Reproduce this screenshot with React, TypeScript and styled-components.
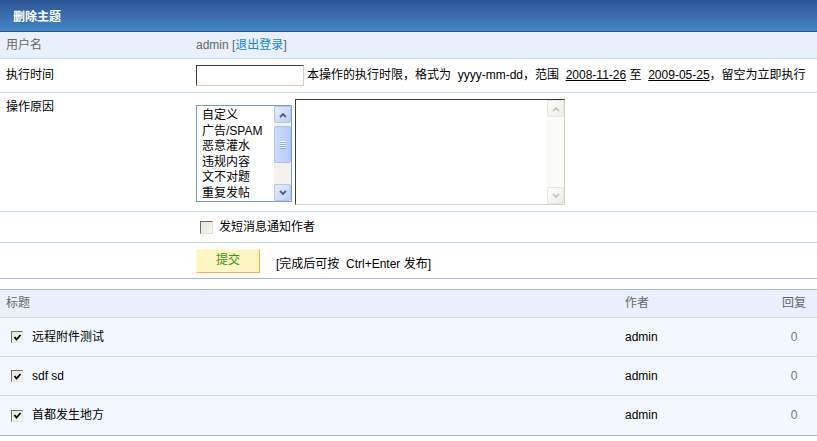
import React from 'react';
import styled, { createGlobalStyle } from 'styled-components';

const Global = createGlobalStyle`
  html, body { margin: 0; padding: 0; background: #fff; }
  body {
    font-family: "Liberation Sans", "Noto Sans CJK SC", sans-serif;
    font-size: 12px;
    color: #000;
  }
  * { box-sizing: border-box; }
`;

const Page = styled.div`
  width: 817px;
`;

const TitleBar = styled.div`
  height: 32px;
  border-bottom: 1px solid #29528e;
  background: linear-gradient(#2d5596, #4486c5);
  color: #fff;
  font-weight: bold;
  font-size: 12px;
  display: flex;
  align-items: center;
  padding-left: 13px;
  padding-bottom: 1px;
`;

const FormRow = styled.div<{ $h: number; $bg?: string; $line?: string; $top?: boolean }>`
  display: grid;
  grid-template-columns: 196px 1fr;
  height: ${p => p.$h}px;
  background: ${p => p.$bg || '#fff'};
  border-bottom: 1px solid ${p => p.$line || '#c5d8ec'};
  align-items: ${p => (p.$top ? 'start' : 'center')};
`;

const Label = styled.div<{ $muted?: boolean; $padTop?: number }>`
  padding-left: 6px;
  padding-top: ${p => p.$padTop || 0}px;
  line-height: 15px;
  color: ${p => (p.$muted ? '#666' : '#000')};
`;

const Value = styled.div<{ $muted?: boolean; $padTop?: number; $top?: boolean; $indent?: number }>`
  display: flex;
  align-items: ${p => (p.$top ? 'flex-start' : 'center')};
  padding-top: ${p => p.$padTop || 0}px;
  padding-left: ${p => p.$indent || 0}px;
  line-height: 15px;
  color: ${p => (p.$muted ? '#666' : '#000')};
  white-space: nowrap;
`;

const Text = styled.span`
  white-space: pre;
`;

const Link = styled.a`
  color: #1a86c6;
  text-decoration: none;
`;

const TextInput = styled.input`
  width: 108px;
  height: 21px;
  margin: 0 3px 0 0;
  padding: 1px 2px;
  border-style: solid;
  border-width: 1px;
  border-color: #3c3c3c #d4d0c8 #d4d0c8 #3c3c3c;
  background: #fff;
  font: inherit;
  outline: none;
`;

const Under = styled.span`
  text-decoration: underline;
`;

const ListBox = styled.div`
  width: 96px;
  height: 97px;
  margin-top: 6px;
  margin-right: 3px;
  border: 1px solid #7f9db9;
  display: flex;
  background: #fff;
`;

const Options = styled.div`
  flex: 1;
  overflow: hidden;
  padding: 2px 0 0 5px;
  line-height: 15.5px;
  font-size: 12px;
  color: #000;
`;

const ScrollBar = styled.div<{ $off?: boolean }>`
  width: 17px;
  display: flex;
  flex-direction: column;
  justify-content: space-between;
  background: ${p => (p.$off ? '#fbfbf7' : '#f3f2ec')};
`;

const ScrollBtn = styled.div<{ $off?: boolean }>`
  width: 17px;
  height: 17px;
  border: 1px solid ${p => (p.$off ? '#e6e6de' : '#b3c7f4')};
  border-radius: 2px;
  background: ${p =>
    p.$off ? 'linear-gradient(135deg, #fdfdfb, #ededE6)' : 'linear-gradient(135deg, #e6eefe, #bccffa)'};
  display: flex;
  align-items: center;
  justify-content: center;
`;

const Thumb = styled.div`
  height: 37px;
  margin-top: 3px;
  border: 1px solid #a9c1f3;
  border-radius: 2px;
  background: linear-gradient(90deg, #cbdafd, #b8cdfb);
  display: flex;
  flex-direction: column;
  align-items: center;
  justify-content: center;
  gap: 1px;
`;

const Grip = styled.span`
  width: 6px;
  height: 1px;
  background: #eef3fe;
  box-shadow: 0 1px 0 #8eaef0;
`;

const Track = styled.div`
  flex: 1;
  display: flex;
  flex-direction: column;
`;

const AreaBox = styled.div`
  width: 270px;
  height: 106px;
  border-style: solid;
  border-width: 1px;
  border-color: #3c3c3c #d4d0c8 #d4d0c8 #3c3c3c;
  display: flex;
  background: #fff;
`;

const Area = styled.textarea`
  flex: 1;
  border: none;
  resize: none;
  outline: none;
  font: inherit;
  padding: 2px;
  overflow: hidden;
  background: transparent;
`;

const Box = styled.span<{ $size: number }>`
  display: inline-flex;
  align-items: center;
  justify-content: center;
  width: ${p => p.$size}px;
  height: ${p => p.$size}px;
  border-style: solid;
  border-width: 1px;
  border-color: #6f6f6f #e4e4dc #e4e4dc #6f6f6f;
  background: linear-gradient(135deg, #e6e6df, #f6f6f2);
  flex: none;
`;

const CheckLabel = styled.span`
  margin-left: 6px;
`;

const Submit = styled.button`
  width: 64px;
  height: 24px;
  padding: 0;
  border-style: solid;
  border-width: 1px;
  border-color: #fff8d8 #f1b44a #f1b44a #fff8d8;
  background: #fff5c3;
  color: #2a9a14;
  font: inherit;
  font-size: 12px;
`;

const Hint = styled.span`
  margin-left: 16px;
  padding-top: 7px;
  white-space: pre;
`;

const Spacer = styled.div`
  height: 10px;
`;

const Table = styled.div`
  border-top: 1px solid #a6b8cb;
`;

const TRow = styled.div<{ $head?: boolean; $h: number; $last?: boolean }>`
  display: grid;
  grid-template-columns: 619px 152px 46px;
  align-items: center;
  height: ${p => p.$h}px;
  background: ${p => (p.$head ? '#e8f1fb' : '#f3f8fe')};
  border-bottom: 1px solid ${p => (p.$last ? '#a6b8cb' : '#c5d8ec')};
  color: ${p => (p.$head ? '#666' : '#000')};
  line-height: 15px;
`;

const TitleCell = styled.div<{ $pad: number }>`
  display: flex;
  align-items: center;
  padding-left: ${p => p.$pad}px;
`;

const TitleText = styled.span`
  margin-left: 9px;
`;

const AuthorCell = styled.div`
  padding-left: 6px;
`;

const ReplyCell = styled.div<{ $muted?: boolean }>`
  text-align: center;
  color: ${p => (p.$muted ? '#777' : 'inherit')};
`;

const Arrow = ({ up, off }: { up?: boolean; off?: boolean }) => (
  <svg width="8" height="6" viewBox="0 0 8 6">
    <path
      d={up ? 'M1 5 L4 2 L7 5' : 'M1 1 L4 4 L7 1'}
      fill="none"
      stroke={off ? '#c9c9c0' : '#4d6185'}
      strokeWidth="1.8"
    />
  </svg>
);

const Check = () => (
  <svg width="9" height="9" viewBox="0 0 9 9">
    <path d="M1.5 4 L3.5 6.5 L7.5 2" fill="none" stroke="#000" strokeWidth="1.8" />
  </svg>
);

const reasons = ['自定义', '广告/SPAM', '恶意灌水', '违规内容', '文不对题', '重复发帖'];

const topics = [
  { title: '远程附件测试', author: 'admin', replies: 0 },
  { title: 'sdf sd', author: 'admin', replies: 0 },
  { title: '首都发生地方', author: 'admin', replies: 0 },
];

export default function App() {
  return (
    <Page>
      <Global />
      <TitleBar>删除主题</TitleBar>

      <FormRow $h={27} $bg="#e8f1fb">
        <Label $muted>用户名</Label>
        <Value $muted>
          <Text>
            admin [<Link href="#">退出登录</Link>]
          </Text>
        </Value>
      </FormRow>

      <FormRow $h={34}>
        <Label>执行时间</Label>
        <Value>
          <TextInput type="text" />
          <Text>
            {'本操作的执行时限，格式为  yyyy-mm-dd，范围  '}
            <Under>2008-11-26</Under>
            {' 至  '}
            <Under>2009-05-25</Under>
            {'，留空为立即执行'}
          </Text>
        </Value>
      </FormRow>

      <FormRow $h={119} $top>
        <Label $padTop={7}>操作原因</Label>
        <Value $top $padTop={6}>
          <ListBox>
            <Options>
              {reasons.map(r => (
                <div key={r}>{r}</div>
              ))}
            </Options>
            <ScrollBar>
              <Track>
                <ScrollBtn>
                  <Arrow up />
                </ScrollBtn>
                <Thumb>
                  <Grip />
                  <Grip />
                  <Grip />
                  <Grip />
                </Thumb>
              </Track>
              <ScrollBtn>
                <Arrow />
              </ScrollBtn>
            </ScrollBar>
          </ListBox>
          <AreaBox>
            <Area />
            <ScrollBar $off>
              <ScrollBtn $off>
                <Arrow up off />
              </ScrollBtn>
              <ScrollBtn $off>
                <Arrow off />
              </ScrollBtn>
            </ScrollBar>
          </AreaBox>
        </Value>
      </FormRow>

      <FormRow $h={31}>
        <Label />
        <Value $indent={4}>
          <Box $size={13} />
          <CheckLabel>发短消息通知作者</CheckLabel>
        </Value>
      </FormRow>

      <FormRow $h={36} $line="#a6b8cb">
        <Label />
        <Value>
          <Submit type="button">提交</Submit>
          <Hint>{'[完成后可按  Ctrl+Enter 发布]'}</Hint>
        </Value>
      </FormRow>

      <Spacer />

      <Table>
        <TRow $head $h={28}>
          <TitleCell $pad={6}>标题</TitleCell>
          <AuthorCell>作者</AuthorCell>
          <ReplyCell>回复</ReplyCell>
        </TRow>
        {topics.map((t, i) => (
          <TRow key={t.title} $h={i === topics.length - 1 ? 40 : 39} $last={i === topics.length - 1}>
            <TitleCell $pad={11}>
              <Box $size={12}>
                <Check />
              </Box>
              <TitleText>{t.title}</TitleText>
            </TitleCell>
            <AuthorCell>{t.author}</AuthorCell>
            <ReplyCell $muted>{t.replies}</ReplyCell>
          </TRow>
        ))}
      </Table>
    </Page>
  );
}
